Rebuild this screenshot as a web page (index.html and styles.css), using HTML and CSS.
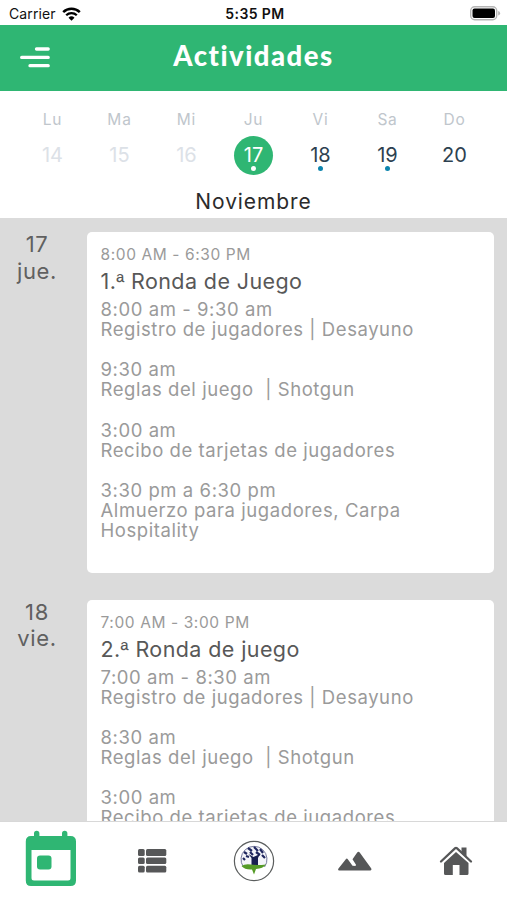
FILE: index.html
```
<!DOCTYPE html>
<html lang="es">
<head>
    <meta charset="UTF-8">
    <meta name="viewport" content="width=device-width, initial-scale=1.0">
    <title>Actividades</title>
    <link rel="stylesheet" href="styles.css">
</head>
<body>
    <div class="app">
        <!-- status bar -->
        <div class="status">
            <div class="carrier">
                <span>Carrier</span>
                <svg class="wifi" width="19" height="14" viewBox="0 0 19 14">
                    <path d="M1.2 5.2a12 12 0 0 1 16.6 0" fill="none" stroke="#000" stroke-width="2.5"/>
                    <path d="M4.2 8.3a7.6 7.6 0 0 1 10.6 0" fill="none" stroke="#000" stroke-width="2.3"/>
                    <path d="M6.5 10.7a4.3 4.3 0 0 1 6 0L9.5 13.7z" fill="#000"/>
                </svg>
            </div>
            <div class="clock">5:35 PM</div>
            <svg class="battery" width="31" height="15" viewBox="0 0 31 15">
                <rect x=".7" y=".7" width="26" height="13" rx="4" fill="#fff" stroke="#b5b5b5" stroke-width="1.4"/>
                <rect x="2.5" y="2.5" width="22.5" height="9.5" rx="2" fill="#000"/>
                <path d="M28.2 5v4.6q1.9-.6 1.9-2.3T28.2 5z" fill="#b5b5b5"/>
            </svg>
        </div>

        <header class="header">
            <svg class="menu" width="30" height="22" viewBox="0 0 30 22">
                <path d="M16.5 2H28.2M1.7 10.4H28.2M10 18.7H28.2" stroke="#fff" stroke-width="3.3" stroke-linecap="round"/>
            </svg>
            <h1 class="title">Actividades</h1>
        </header>

        <!-- semana -->
        <section class="calendar">
            <div class="week">
                <div class="day past"><span class="name">Lu</span><span class="num">14</span></div>
                <div class="day past"><span class="name">Ma</span><span class="num">15</span></div>
                <div class="day past"><span class="name">Mi</span><span class="num">16</span></div>
                <div class="day active"><span class="name">Ju</span><span class="num">17<i class="dot"></i></span></div>
                <div class="day"><span class="name">Vi</span><span class="num">18<i class="dot"></i></span></div>
                <div class="day"><span class="name">Sa</span><span class="num">19<i class="dot"></i></span></div>
                <div class="day"><span class="name">Do</span><span class="num">20</span></div>
            </div>
            <div class="month">Noviembre</div>
        </section>

        <main class="list">
            <div class="row">
                <div class="date">17<br>jue.</div>
                <article class="card">
                    <div class="time">8:00 AM - 6:30 PM</div>
                    <h2 class="name-act">1.<span class="ord">ª</span> Ronda de Juego</h2>
                    <div class="desc">
                        <p>8:00 am - 9:30 am</p>
                        <p>Registro de jugadores | Desayuno</p>
                        <br>
                        <p>9:30 am</p>
                        <p>Reglas del juego&nbsp; | Shotgun</p>
                        <br>
                        <p>3:00 am</p>
                        <p>Recibo de tarjetas de jugadores</p>
                        <br>
                        <p>3:30 pm a 6:30 pm</p>
                        <p>Almuerzo para jugadores, Carpa<br>Hospitality</p>
                    </div>
                </article>
            </div>
            <div class="row">
                <div class="date">18<br>vie.</div>
                <article class="card">
                    <div class="time">7:00 AM - 3:00 PM</div>
                    <h2 class="name-act">2.<span class="ord">ª</span> Ronda de juego</h2>
                    <div class="desc">
                        <p>7:00 am - 8:30 am</p>
                        <p>Registro de jugadores | Desayuno</p>
                        <br>
                        <p>8:30 am</p>
                        <p>Reglas del juego&nbsp; | Shotgun</p>
                        <br>
                        <p>3:00 am</p>
                        <p>Recibo de tarjetas de jugadores</p>
                    </div>
                </article>
            </div>
        </main>

        <nav class="tabs">
            <a class="tab tab-on">
                <svg width="52" height="57" viewBox="0 0 52 57">
                    <path d="M6 6H9V3.5a2.7 2.7 0 0 1 5.4 0V6H37V3.5a2.7 2.7 0 0 1 5.4 0V6H45.5Q51 6 51 11.5V50.5Q51 56 45.5 56H6Q.8 56 .8 50.5V11.5Q.8 6 6 6zM6.5 20V48Q6.5 50.5 9 50.5H43Q45.5 50.5 45.5 48V20z" fill="#2fb673" fill-rule="evenodd"/>
                    <rect x="12" y="25.5" width="14.5" height="14" rx="3" fill="#2fb673"/>
                </svg>
            </a>
            <a class="tab">
                <svg width="30" height="26" viewBox="0 0 30 26" fill="#565758">
                    <rect x="1" y="1" width="6.7" height="7" rx="1.5"/><rect x="9" y="1" width="20.3" height="7" rx="1.5"/>
                    <rect x="1" y="9.5" width="6.7" height="6.5" rx="1.5"/><rect x="9" y="9.5" width="20.3" height="6.5" rx="1.5"/>
                    <rect x="1" y="17.7" width="6.7" height="6.8" rx="1.5"/><rect x="9" y="17.7" width="20.3" height="6.8" rx="1.5"/>
                </svg>
            </a>
            <a class="tab">
                <svg width="42" height="42" viewBox="0 0 42 42">
                    <circle cx="21" cy="21" r="19.6" fill="#fff" stroke="#5b5e5e" stroke-width="1.2"/>
                    <path d="M10.5 27A13 13 0 1 1 31.5 27" fill="#f4f5fa" stroke="#777b9e" stroke-width="1"/>
                    <path d="M11 12l3 2M15 8l4 3M21 7l4 4M27 9l3 4M13 16l3 1M17 12l3 3M23 12l4 3M29 15l3 3M10 18l2 2" stroke="#20275f" stroke-width="2.2"/>
                    <path d="M15.5 14l5 3 6.500-3-2 4v7.500h-6.500V18z" fill="#171e50"/>
                    <path d="M8.500 26Q12 23.500 18 24.500T33 24.500Q30 28.500 23 29L21 34.500 19 29.500Q12 30 8.500 26z" fill="#559b27"/>
                </svg>
            </a>
            <a class="tab">
                <svg width="36" height="22" viewBox="0 0 36 22">
                    <path d="M2 20.5Q.5 20.3 1.3 18.8L8.8 9.2Q9.8 8 10.8 9.2L15.5 15.7 18.5 16 19 14.800 15.500 9.200 20.200 2.500Q21.500 1 22.700 2.500L34.300 18.500Q35 20.500 33.300 20.500z" fill="#565758"/>
                </svg>
            </a>
            <a class="tab">
                <svg width="34" height="32" viewBox="0 0 34 32">
                    <path d="M22.5 2.5H27.5V13L22.5 8z" fill="#565758"/>
                    <path d="M2 16.5L16.2 3.200Q17 2.500 17.800 3.200L32 16.500" fill="none" stroke="#565758" stroke-width="2.3" stroke-linecap="round"/>
                    <path d="M5 18L17 7 29.5 18V28.5Q29.5 30 28 30H20.5V20H13.8V30H6.5Q5 30 5 28.5z" fill="#565758"/>
                </svg>
            </a>
        </nav>
    </div>
</body>
</html>
```

FILE: styles.css
```
*{margin: 0;padding: 0;box-sizing: border-box;}
body{font-family: Inter, "Liberation Sans", sans-serif;background: #fff;}
svg{display: block;}
.app{width: 507px;height: 900px;display: flex;flex-direction: column;overflow: hidden;}

.status{height: 25px;flex: none;display: grid;grid-template-columns: 1fr auto 1fr;align-items: center;padding: 2px 6px 0 9px;font-size: 14px;color: #111;}
.carrier{display: flex;align-items: center;gap: 6px;letter-spacing: .1px;}
.clock{font-weight: 600;font-size: 14px;letter-spacing: .4px;}
.battery{justify-self: end;}

.header{height: 66px;flex: none;background: #2fb673;display: grid;grid-template-columns: 50px 1fr 50px;align-items: center;padding: 0 20px;}
.title{color: #fff;font-family: Lato, sans-serif;font-size: 27.5px;font-weight: 900;line-height: 32px;text-align: center;letter-spacing: 1.5px;padding-bottom: 4px;}

.calendar{height: 127px;flex: none;padding: 19px 19px 0;}
.week{display: flex;}
.day{flex: 1;display: flex;flex-direction: column;align-items: center;color: #2d4150;}
.name{font-size: 15.5px;line-height: 19px;color: #c0c6cc;letter-spacing: .8px;}
.num{position: relative;width: 39px;height: 39px;margin-top: 6.5px;border-radius: 50%;font-size: 20px;line-height: 38px;text-align: center;}
.past .num{color: #dce1e7;}
.active .num{background: #2fb673;color: #fff;}
.dot{position: absolute;left: 17px;top: 30px;width: 5px;height: 5px;border-radius: 50%;background: #0c84ad;}
.active .dot{background: #fff;}
.month{margin-top: 13px;text-align: center;font-size: 21px;line-height: 28px;color: #2b2b2b;letter-spacing: .9px;}

.list{flex: 1;min-height: 0;overflow: hidden;background: #dbdbdb;padding: 14px 13px 0 0;display: flex;flex-direction: column;gap: 26.5px;}
.row{display: flex;flex: none;}
.date{width: 87px;margin-top: -1px;padding-right: 13px;text-align: center;font-size: 22px;line-height: 26.5px;color: #606060;letter-spacing: .6px;}
.card{flex: 1;height: 341px;background: #fff;border-radius: 5px;padding: 13px 13px 0 13.5px;}
.time{font-size: 15.5px;line-height: 19px;color: #9a9a9a;letter-spacing: .6px;}
.name-act{height: 35px;font-size: 21.5px;line-height: 35px;font-weight: 400;color: #585858;letter-spacing: .4px;}
.ord{font-family: "Liberation Sans", sans-serif;line-height: 1;}
.desc{font-size: 18.5px;line-height: 20.1px;color: #9a9a9a;white-space: nowrap;letter-spacing: .57px;}

.tabs{height: 79px;flex: none;border-top: 1px solid #d8d8d8;background: #fff;display: flex;align-items: center;}
.tab{flex: 1;display: flex;justify-content: center;}
.tab-on{padding-bottom: 6px;}
```
